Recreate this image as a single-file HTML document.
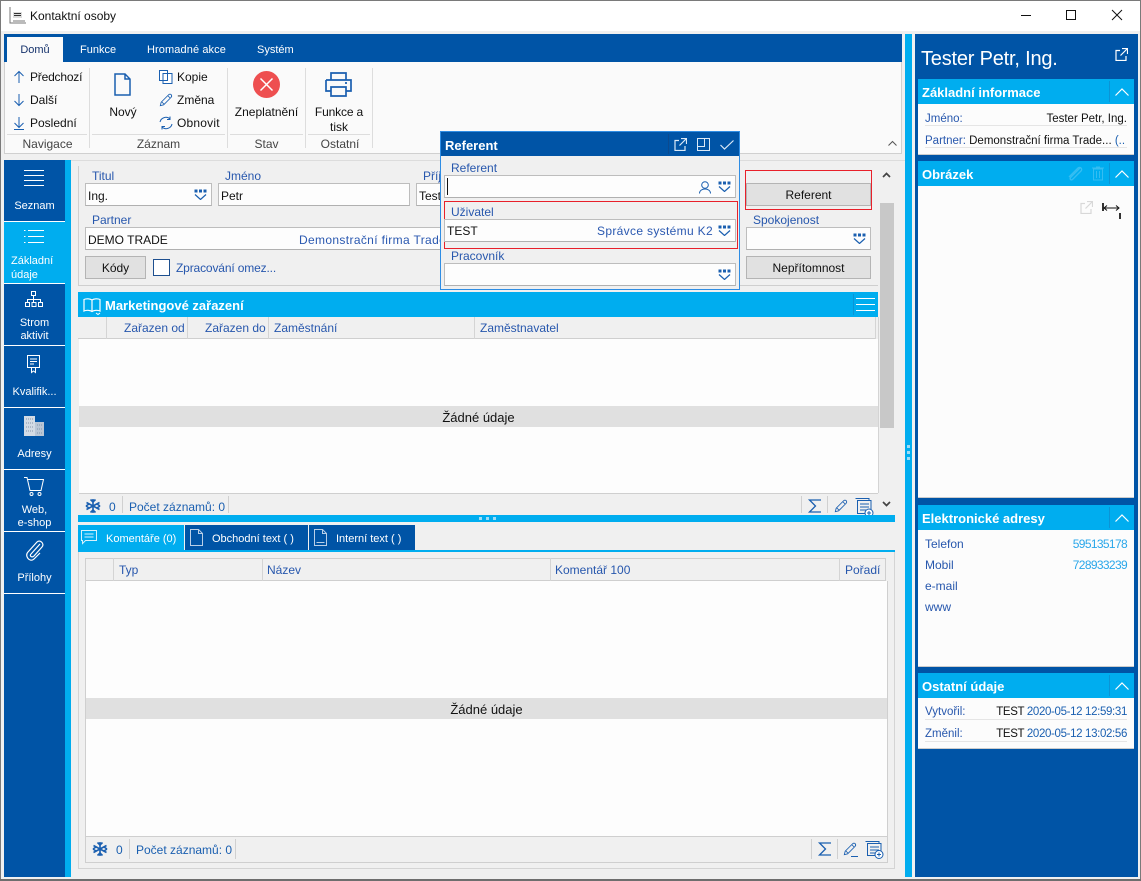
<!DOCTYPE html>
<html><head><meta charset="utf-8"><style>
html,body{margin:0;padding:0;background:#f0f0f0;}
#r{position:relative;width:1141px;height:881px;overflow:hidden;background:#f0f0f0;font:12px/16px "Liberation Sans","DejaVu Sans",sans-serif;color:#111;}
#r div{position:absolute;box-sizing:border-box;}
.t{white-space:nowrap;height:16px;}
.l{color:#2757ad;}
.b{color:#1a5fb0;}
.w{color:#fff;}
.c{text-align:center;}
.f{background:#fdfdfd;border:1px solid #bdbdbd;border-bottom-color:#b0b0b0;height:23px;}
.btn{background:#e1e1e1;border:1px solid #b4b4b4;height:23px;text-align:center;line-height:23px;}
.dk{background:#0054a6;}
.sk{background:#00adef;}
.ln{background:#c9c9c9;}
.h{font-weight:bold;font-size:13px;color:#fff;}
svg{position:absolute;overflow:visible;fill:none;}
</style></head><body><div id="r">
<svg width="0" height="0"><defs>
<symbol id="dd" viewBox="0 0 13 11"><path d="M.5.500h3v3h-3zM5 .5h3v3H5zM9.500.500h3v3h-3z" fill="#1a5fb0"/><path d="M1 5.500l5.500 5 5.500-5" stroke="#1a5fb0" stroke-width="1.200" fill="none"/></symbol>
<symbol id="up" viewBox="0 0 14 8"><path d="M.5 7.500L7 1l6.500 6.500" stroke="#fff" stroke-width="1.200" fill="none"/></symbol>
<symbol id="flake" viewBox="0 0 16 16"><g stroke="#1a5fb0" stroke-width="1.600" fill="none"><path d="M8 1v14M1.500 4.500l13 7M14.500 4.500l-13 7"/><path d="M5.500 1.500L8 4l2.500-2.500M5.500 14.500L8 12l2.500 2.500M1 8l3-2M1 8l3 2M15 8l-3-2M15 8l-3 2"/></g></symbol>
<symbol id="pen" viewBox="0 0 16 16"><path d="M1.500 14.500l1-4L11 2c1-1 2.500-.8 3 0s.8 2-.2 3l-8.500 8.500z M3 10l3 3M10 3l3 3" stroke="#1a5fb0" fill="none"/></symbol>
<symbol id="pop" viewBox="0 0 13 13"><path d="M5 2.500H1v10h10V8M7 .5h5.500V6M12.500.5L5.500 7.500" stroke="currentColor" stroke-width="1.200" fill="none"/></symbol>
</defs></svg>

<!-- window frame + title -->
<div style="left:0;top:0;width:1141px;height:31px;background:#fff"></div>
<div style="left:0;top:0;width:1141px;height:1px;background:#7a7a7a"></div>
<div style="left:0;top:0;width:1px;height:881px;background:#7a7a7a"></div>
<div style="left:1140px;top:0;width:1px;height:881px;background:#7a7a7a"></div>
<div style="left:0;top:879px;width:1141px;height:2px;background:#6e6e6e"></div>
<svg style="left:9px;top:7px" width="17" height="17"><path d="M1 0v16h16" stroke="#777"/><path d="M4 5h9v6H4z" fill="#ddd"/><path d="M5 6.500h7M5 8.500h7" stroke="#333"/><path d="M4 13h12v3H4z" fill="#bbb"/></svg>
<div class="t" style="left:30px;top:8px;color:#111">Kontaktní osoby</div>
<svg style="left:1021px;top:15px" width="10" height="1"><path d="M0 .5h10" stroke="#111"/></svg>
<svg style="left:1066px;top:10px" width="10" height="10"><path d="M.5.500h9v9h-9z" stroke="#111"/></svg>
<svg style="left:1112px;top:10px" width="10" height="10"><path d="M0 0l10 10M10 0L0 10" stroke="#111"/></svg>

<!-- ribbon -->
<div class="dk" style="left:4px;top:34px;width:898px;height:28px"></div>
<div style="left:7px;top:37px;width:56px;height:25px;background:#fafafa"></div>
<div class="t c" style="left:7px;top:42px;width:56px;font-size:11px;color:#14316b">Domů</div>
<div class="t w" style="left:80px;top:42px;font-size:11px">Funkce</div>
<div class="t w" style="left:147px;top:42px;font-size:11px;letter-spacing:.1px">Hromadné akce</div>
<div class="t w" style="left:257px;top:42px;font-size:11px">Systém</div>
<div style="left:4px;top:62px;width:898px;height:92px;background:#fafafa;border:1px solid #d0d0d0;border-top:0"></div>
<div style="left:89px;top:68px;width:1px;height:80px;background:#ddd"></div>
<div style="left:227px;top:68px;width:1px;height:80px;background:#ddd"></div>
<div style="left:305px;top:68px;width:1px;height:80px;background:#ddd"></div>
<div style="left:372px;top:68px;width:1px;height:80px;background:#ddd"></div>
<div style="left:7px;top:134px;width:80px;height:1px;background:#ddd"></div>
<div style="left:92px;top:134px;width:133px;height:1px;background:#ddd"></div>
<div style="left:230px;top:134px;width:73px;height:1px;background:#ddd"></div>
<div style="left:308px;top:134px;width:62px;height:1px;background:#ddd"></div>
<svg style="left:13px;top:71px" width="12" height="12"><path d="M6 12V1M1.500 5L6 .5 10.500 5" stroke="#1a5fb0"/></svg>
<svg style="left:13px;top:94px" width="12" height="12"><path d="M6 0v11M1.500 7L6 11.500 10.500 7" stroke="#1a5fb0"/></svg>
<svg style="left:13px;top:117px" width="12" height="13"><path d="M6 0v10M1.500 6L6 10.500 10.500 6M1 12.500h10" stroke="#1a5fb0"/></svg>
<div class="t" style="left:30px;top:69px;letter-spacing:-.2px">Předchozí</div>
<div class="t" style="left:30px;top:92px">Další</div>
<div class="t" style="left:30px;top:115px">Poslední</div>
<div class="t c" style="left:8px;top:136px;width:79px;color:#444">Navigace</div>
<svg style="left:114px;top:73px" width="17" height="23"><path d="M1 1h10l5 5v16H1zM11 1v5h5" stroke="#1a5fb0" stroke-width="1.500"/></svg>
<div class="t c" style="left:92px;top:104px;width:62px">Nový</div>
<svg style="left:159px;top:70px" width="14" height="14"><path d="M.5.500h8v10h-8zM4 3.500h9v10H4z" stroke="#1a5fb0" fill="#fff"/></svg>
<svg style="left:159px;top:93px" width="14" height="14"><use href="#pen" width="14" height="14"/></svg>
<svg style="left:159px;top:116px" width="14" height="14"><path d="M1 6a6 6 0 0 1 10-3M13 8a6 6 0 0 1-10 3M11 .5V3.500H8M3 13.500V10.500h3" stroke="#1a5fb0"/></svg>
<div class="t" style="left:177px;top:69px">Kopie</div>
<div class="t" style="left:177px;top:92px">Změna</div>
<div class="t" style="left:177px;top:115px;letter-spacing:.2px">Obnovit</div>
<div class="t c" style="left:92px;top:136px;width:133px;color:#444">Záznam</div>
<svg style="left:253px;top:71px" width="27" height="27"><circle cx="13.500" cy="13.500" r="13.500" fill="#ee4f50"/><path d="M7.500 7.500l12 12M19.500 7.500l-12 12" stroke="#fff" stroke-width="1.500"/></svg>
<div class="t c" style="left:228px;top:104px;width:77px">Zneplatnění</div>
<div class="t c" style="left:228px;top:136px;width:77px;color:#444">Stav</div>
<svg style="left:325px;top:72px" width="27" height="25"><path d="M6 8V1h15v7M1 8h25v11h-5M6 19H1V8M6 15h15v9H6zM20 11h2" stroke="#1a5fb0" stroke-width="1.700"/></svg>
<div class="t c" style="left:306px;top:104px;width:66px;letter-spacing:-.15px">Funkce a</div>
<div class="t c" style="left:306px;top:119px;width:66px">tisk</div>
<div class="t c" style="left:306px;top:136px;width:68px;color:#444">Ostatní</div>
<svg style="left:888px;top:141px" width="9" height="5"><path d="M.5 4.500L4.500.5l4 4" stroke="#555"/></svg>

<!-- blue right strip + right panel -->
<div class="sk" style="left:905px;top:34px;width:7px;height:843px"></div>
<div style="left:907px;top:445px;width:3px;height:18px;background:repeating-linear-gradient(#9fdcf5 0,#9fdcf5 3px,#00adef 3px,#00adef 6px)"></div>
<div class="dk" style="left:915px;top:34px;width:223px;height:843px"></div>
<div class="t w" style="left:921px;top:47px;font-size:20px;line-height:24px;height:24px;letter-spacing:-.2px">Tester Petr, Ing.</div>
<svg style="left:1115px;top:48px;color:#fff" width="13" height="13"><use href="#pop" width="13" height="13"/></svg>

<div class="sk" style="left:918px;top:79px;width:216px;height:25px"></div>
<div class="t h" style="left:922px;top:85px">Základní informace</div>
<div style="left:1109px;top:81px;width:1px;height:21px;background:#0a94d6"></div>
<svg style="left:1115px;top:88px" width="14" height="8"><use href="#up" width="14" height="8"/></svg>
<div style="left:918px;top:104px;width:216px;height:51px;background:#fcfcfc;border-bottom:1px solid #ccc"></div>
<div class="t l" style="left:925px;top:111px;font-size:11.5px">Jméno:</div>
<div class="t" style="right:14px;top:111px;font-size:11.5px">Tester Petr, Ing.</div>
<div style="left:925px;top:125px;width:202px;height:1px;background:#e5e5e5"></div>
<div class="t" style="left:925px;top:133px;font-size:11.5px"><span class="l">Partner:</span> Demonstrační firma Trade... <span class="b">(..</span></div>
<div style="left:925px;top:147px;width:202px;height:1px;background:#e5e5e5"></div>

<div class="sk" style="left:918px;top:161px;width:216px;height:25px"></div>
<div class="t h" style="left:922px;top:167px">Obrázek</div>
<div style="left:1109px;top:163px;width:1px;height:21px;background:#0a94d6"></div>
<svg style="left:1115px;top:170px" width="14" height="8"><use href="#up" width="14" height="8"/></svg>
<svg style="left:1067px;top:165px" width="16" height="17"><path d="M13 3L4 12c-2 2 0 4 2 2l8-8c2-2-1-5-3-3L2 12" stroke="#35bdf2" stroke-width="1.300"/></svg>
<svg style="left:1092px;top:166px" width="12" height="15"><path d="M1.500 3h9v11h-9zM0 2h12M4 1h4M4.500 5v7M7.500 5v7" stroke="#35bdf2"/></svg>
<div style="left:918px;top:186px;width:216px;height:312px;background:#fcfcfc;border-bottom:1px solid #ccc"></div>
<svg style="left:1080px;top:201px;color:#d8d8d8" width="13" height="13"><use href="#pop" width="13" height="13"/></svg>
<svg style="left:1102px;top:203px" width="20" height="16"><path d="M1 0v8" stroke="#333" stroke-width="2"/><path d="M2 5h15M5 2.500L2 5l3 2.500M14 2.500L17 5l-3 2.500" stroke="#111"/><path d="M18 10v6" stroke="#333" stroke-width="2"/></svg>

<div class="sk" style="left:918px;top:505px;width:216px;height:25px"></div>
<div class="t h" style="left:922px;top:511px">Elektronické adresy</div>
<div style="left:1109px;top:507px;width:1px;height:21px;background:#0a94d6"></div>
<svg style="left:1115px;top:514px" width="14" height="8"><use href="#up" width="14" height="8"/></svg>
<div style="left:918px;top:530px;width:216px;height:137px;background:#fcfcfc;border-bottom:1px solid #ccc"></div>
<div class="t l" style="left:925px;top:536px">Telefon</div>
<div class="t" style="right:14px;top:536px;color:#2aa7ea;letter-spacing:-.65px">595135178</div>
<div class="t l" style="left:925px;top:557px">Mobil</div>
<div class="t" style="right:14px;top:557px;color:#2aa7ea;letter-spacing:-.65px">728933239</div>
<div class="t l" style="left:925px;top:578px">e-mail</div>
<div class="t l" style="left:925px;top:599px">www</div>

<div class="sk" style="left:918px;top:673px;width:216px;height:25px"></div>
<div class="t h" style="left:922px;top:679px">Ostatní údaje</div>
<div style="left:1109px;top:675px;width:1px;height:21px;background:#0a94d6"></div>
<svg style="left:1115px;top:682px" width="14" height="8"><use href="#up" width="14" height="8"/></svg>
<div style="left:918px;top:698px;width:216px;height:51px;background:#fcfcfc;border-bottom:1px solid #ccc"></div>
<div class="t l" style="left:925px;top:704px;font-size:11.5px">Vytvořil:</div>
<div class="t" style="right:14px;top:704px;font-size:11.5px;letter-spacing:-.35px">TEST <span class="b">2020-05-12 12:59:31</span></div>
<div style="left:925px;top:719px;width:202px;height:1px;background:#e5e5e5"></div>
<div class="t l" style="left:925px;top:726px;font-size:11.5px">Změnil:</div>
<div class="t" style="right:14px;top:726px;font-size:11.5px;letter-spacing:-.35px">TEST <span class="b">2020-05-12 13:02:56</span></div>
<div style="left:925px;top:741px;width:202px;height:1px;background:#e5e5e5"></div>

<!-- left sidebar -->
<div class="dk" style="left:4px;top:160px;width:61px;height:717px"></div>
<div class="sk" style="left:65px;top:160px;width:6px;height:717px"></div>
<div class="sk" style="left:4px;top:222px;width:61px;height:61px"></div>
<div style="left:4px;top:221px;width:61px;height:1px;background:#fff"></div>
<div style="left:4px;top:283px;width:61px;height:1px;background:#fff"></div>
<div style="left:4px;top:345px;width:61px;height:1px;background:#fff"></div>
<div style="left:4px;top:407px;width:61px;height:1px;background:#fff"></div>
<div style="left:4px;top:469px;width:61px;height:1px;background:#fff"></div>
<div style="left:4px;top:531px;width:61px;height:1px;background:#fff"></div>
<div style="left:4px;top:593px;width:61px;height:1px;background:#fff"></div>
<svg style="left:24px;top:170px" width="20" height="17"><path d="M0 .5h20M0 5.500h20M0 10.500h20M0 15.500h20" stroke="#fff"/></svg>
<div class="t w c" style="left:4px;top:198px;width:61px;font-size:11px">Seznam</div>
<svg style="left:24px;top:230px" width="20" height="14"><path d="M4 .5h16M4 6.500h16M4 12.500h16" stroke="#fff"/><path d="M0 .5h1.500M0 6.500h1.500M0 12.500h1.500" stroke="#fff"/></svg>
<div class="t w" style="left:11px;top:254px;font-size:11px;line-height:14px;height:30px">Základní<br>údaje</div>
<svg style="left:25px;top:291px" width="18" height="16"><path d="M6.500.5h4v4h-4zM.5 11.500h4v4h-4zM7 11.500h4v4H7zM13.500 11.500h4v4h-4zM8.500 4.500v7M2.500 11.500v-3h13v3" stroke="#fff"/></svg>
<div class="t w c" style="left:4px;top:317px;width:61px;font-size:11px;line-height:13px;height:28px">Strom<br>aktivit</div>
<svg style="left:27px;top:355px" width="14" height="18"><path d="M.5.500h12v12h-12zM3 4h7M3 6.500h7M3 9h4M4.500 12.500v5l2-1.500 2 1.500v-5" stroke="#fff"/></svg>
<div class="t w c" style="left:4px;top:384px;width:61px;font-size:11px">Kvalifik...</div>
<svg style="left:24px;top:416px" width="20" height="20"><path d="M0 0h11v20H0z" fill="#d3dbe5"/><path d="M11 6h9v14h-9z" fill="#b9c6d6"/><path d="M2 3h7M2 7h7M2 11h7M2 15h7M13 9h5M13 13h5M13 17h5" stroke="#8496ab" stroke-dasharray="1 1"/></svg>
<div class="t w c" style="left:4px;top:446px;width:61px;font-size:11px">Adresy</div>
<svg style="left:24px;top:477px" width="20" height="19"><path d="M0 .5h3l3 13h11l2.500-11H4" stroke="#fff"/><circle cx="7.500" cy="17" r="1.500" stroke="#fff"/><circle cx="15.500" cy="17" r="1.500" stroke="#fff"/></svg>
<div class="t w c" style="left:4px;top:504px;width:61px;font-size:11px;line-height:13px;height:28px">Web,<br>e-shop</div>
<svg style="left:25px;top:540px" width="19" height="21"><path d="M15 4L6 14c-2 2 1 4 3 2l8-9c3-3-2-8-5-5L3 12c-4 4 2 11 6 7l6-6" stroke="#fff" stroke-width="1.200"/></svg>
<div class="t w c" style="left:4px;top:570px;width:61px;font-size:11px">Přílohy</div>

<!-- form group -->
<div style="left:78px;top:166px;width:1px;height:119px;background:#d0d0d0"></div>
<div style="left:78px;top:285px;width:800px;height:1px;background:#cfcfcf"></div>
<div style="left:71px;top:160px;width:834px;height:1px;background:#dcdcdc"></div>
<div class="t l" style="left:92px;top:168px">Titul</div>
<div class="f" style="left:85px;top:183px;width:127px"></div>
<div class="t" style="left:88px;top:188px">Ing.</div>
<svg style="left:194px;top:189px" width="13" height="11"><use href="#dd" width="13" height="11"/></svg>
<div class="t l" style="left:225px;top:168px">Jméno</div>
<div class="f" style="left:218px;top:183px;width:192px"></div>
<div class="t" style="left:221px;top:188px">Petr</div>
<div class="t l" style="left:423px;top:168px">Příjmení</div>
<div class="f" style="left:416px;top:183px;width:60px"></div>
<div class="t" style="left:419px;top:188px">Tester</div>
<div class="t l" style="left:92px;top:212px">Partner</div>
<div class="f" style="left:85px;top:227px;width:370px"></div>
<div class="t" style="left:88px;top:232px">DEMO TRADE</div>
<div class="t" style="left:299px;top:232px;color:#2a58b0;letter-spacing:.35px">Demonstrační firma Trade</div>
<div class="btn" style="left:85px;top:256px;width:61px">Kódy</div>
<div style="left:153px;top:259px;width:17px;height:17px;background:#fff;border:1px solid #1d4f8f"></div>
<div class="t l" style="left:176px;top:260px;letter-spacing:-.15px">Zpracování omez...</div>

<div style="left:745px;top:170px;width:127px;height:40px;border:1px solid #e8202a"></div>
<div class="btn" style="left:746px;top:183px;width:125px">Referent</div>
<div class="t l" style="left:753px;top:212px">Spokojenost</div>
<div class="f" style="left:746px;top:227px;width:125px"></div>
<svg style="left:853px;top:233px" width="13" height="11"><use href="#dd" width="13" height="11"/></svg>
<div class="btn" style="left:746px;top:256px;width:125px">Nepřítomnost</div>

<!-- scrollbar -->
<svg style="left:882px;top:172px" width="9" height="6"><path d="M1 5l3.500-3.500L8 5" stroke="#444" stroke-width="1.700"/></svg>
<div style="left:880px;top:203px;width:14px;height:225px;background:#c8c8c8"></div>
<svg style="left:882px;top:501px" width="9" height="6"><path d="M1 1l3.500 3.500L8 1" stroke="#444" stroke-width="1.700"/></svg>

<!-- marketing table -->
<div class="sk" style="left:78px;top:292px;width:800px;height:25px"></div>
<svg style="left:83px;top:298px" width="18" height="17"><path d="M9 2C7 .5 3 .5 1 1.500V13c2-1 6-1 8 .5 2-1.500 6-1.500 8-.5V1.500C15 .5 11 .5 9 2zM9 2v11.500" stroke="#fff" stroke-width="1.200"/><path d="M13 15l2 1.500 2-1.500" stroke="#fff"/></svg>
<div class="t h" style="left:105px;top:298px">Marketingové zařazení</div>
<div style="left:853px;top:294px;width:1px;height:21px;background:#0a94d6"></div>
<svg style="left:856px;top:298px" width="19" height="14"><path d="M0 .5h19M0 6.500h19M0 12.500h19" stroke="#fff"/></svg>
<div style="left:78px;top:317px;width:798px;height:22px;background:#f0f0f0;border-bottom:1px solid #cfcfcf"></div>
<div style="left:106px;top:317px;width:1px;height:22px;background:#d4d4d4"></div>
<div style="left:187px;top:317px;width:1px;height:22px;background:#d4d4d4"></div>
<div style="left:268px;top:317px;width:1px;height:22px;background:#d4d4d4"></div>
<div style="left:474px;top:317px;width:1px;height:22px;background:#d4d4d4"></div>
<div style="left:875px;top:317px;width:1px;height:22px;background:#d4d4d4"></div>
<div class="t l" style="left:124px;top:320px">Zařazen od</div>
<div class="t l" style="left:205px;top:320px">Zařazen do</div>
<div class="t l" style="left:274px;top:320px">Zaměstnání</div>
<div class="t l" style="left:480px;top:320px">Zaměstnavatel</div>
<div style="left:79px;top:339px;width:799px;height:154px;background:#fdfdfd"></div>
<div style="left:79px;top:406px;width:799px;height:21px;background:#e0e0e0"></div>
<div class="t c" style="left:79px;top:410px;width:799px;font-size:13px">Žádné údaje</div>
<div style="left:878px;top:317px;width:1px;height:176px;background:#d4d4d4"></div>
<div style="left:79px;top:493px;width:799px;height:1px;background:#cfcfcf"></div>
<svg style="left:85px;top:498px" width="16" height="16"><use href="#flake" width="16" height="16"/></svg>
<div class="t b" style="left:109px;top:499px">0</div>
<div style="left:122px;top:496px;width:1px;height:17px;background:#d0d0d0"></div>
<div class="t b" style="left:129px;top:499px">Počet záznamů: 0</div>
<div style="left:228px;top:496px;width:1px;height:17px;background:#d0d0d0"></div>
<div style="left:801px;top:496px;width:1px;height:17px;background:#d0d0d0"></div>
<div style="left:827px;top:496px;width:1px;height:17px;background:#d0d0d0"></div>
<svg style="left:808px;top:499px" width="14" height="14"><path d="M13 1H1.500L7.500 7 1.500 13H13" stroke="#1a5fb0" stroke-width="1.300"/></svg>
<svg style="left:834px;top:499px" width="14" height="14"><use href="#pen" width="14" height="14"/></svg>
<svg style="left:855px;top:498px" width="19" height="18"><path d="M.5.500H14v2M2.500 2.500H16v13H2.500zM5 6h9M5 9h9M5 12h6" stroke="#1a5fb0"/><circle cx="14" cy="15" r="4" stroke="#1a5fb0" fill="#fff"/><path d="M12 15h4M14 13v4" stroke="#1a5fb0"/></svg>

<!-- splitter & tabs -->
<div class="sk" style="left:78px;top:515px;width:817px;height:7px"></div>
<div style="left:479px;top:517px;width:19px;height:3px;background:repeating-linear-gradient(90deg,#9fdcf5 0,#9fdcf5 3px,#00adef 3px,#00adef 7px)"></div>
<div class="sk" style="left:78px;top:525px;width:106px;height:25px"></div>
<div class="dk" style="left:185px;top:525px;width:123px;height:25px"></div>
<div class="dk" style="left:309px;top:525px;width:106px;height:25px"></div>
<svg style="left:81px;top:530px" width="16" height="15"><path d="M.5.500h15v10H4.500L1.500 13.500V10.500H.5zM3.500 4h9M3.500 7h9" stroke="#d6f1fc"/></svg>
<div class="t w" style="left:106px;top:531px;font-size:11px">Komentáře (0)</div>
<svg style="left:190px;top:529px" width="13" height="17"><path d="M.5.500h8l4 4v12H.5zM8.500.500v4h4" stroke="#b9cfe8"/></svg>
<div class="t w" style="left:212px;top:531px;font-size:11px">Obchodní text ( )</div>
<svg style="left:314px;top:529px" width="13" height="17"><path d="M.5.500h8l4 4v12H.5zM8.500.500v4h4M2.500 13.500h8" stroke="#b9cfe8"/></svg>
<div class="t w" style="left:336px;top:531px;font-size:11px">Interní text ( )</div>
<div class="sk" style="left:78px;top:550px;width:817px;height:2px"></div>

<!-- lower panel -->
<div style="left:78px;top:552px;width:817px;height:317px;border:1px solid #d4d4d4;border-top:0"></div>
<div style="left:85px;top:558px;width:801px;height:23px;background:#f0f0f0;border:1px solid #cfcfcf"></div>
<div style="left:113px;top:558px;width:1px;height:23px;background:#d4d4d4"></div>
<div style="left:262px;top:558px;width:1px;height:23px;background:#d4d4d4"></div>
<div style="left:550px;top:558px;width:1px;height:23px;background:#d4d4d4"></div>
<div style="left:839px;top:558px;width:1px;height:23px;background:#d4d4d4"></div>
<div class="t l" style="left:119px;top:562px">Typ</div>
<div class="t l" style="left:267px;top:562px">Název</div>
<div class="t l" style="left:555px;top:562px">Komentář 100</div>
<div class="t l" style="left:845px;top:562px">Pořadí</div>
<div style="left:85px;top:581px;width:803px;height:256px;background:#fdfdfd;border-left:1px solid #cfcfcf;border-right:1px solid #cfcfcf;border-bottom:1px solid #cfcfcf"></div>
<div style="left:86px;top:698px;width:801px;height:21px;background:#e0e0e0"></div>
<div class="t c" style="left:86px;top:702px;width:801px;font-size:13px">Žádné údaje</div>
<div style="left:85px;top:837px;width:1px;height:25px;background:#cfcfcf"></div>
<div style="left:887px;top:837px;width:1px;height:25px;background:#cfcfcf"></div>
<div style="left:85px;top:862px;width:803px;height:1px;background:#cfcfcf"></div>
<svg style="left:92px;top:841px" width="16" height="16"><use href="#flake" width="16" height="16"/></svg>
<div class="t b" style="left:116px;top:842px">0</div>
<div style="left:129px;top:839px;width:1px;height:20px;background:#d0d0d0"></div>
<div class="t b" style="left:136px;top:842px">Počet záznamů: 0</div>
<div style="left:235px;top:839px;width:1px;height:20px;background:#d0d0d0"></div>
<div style="left:811px;top:839px;width:1px;height:20px;background:#d0d0d0"></div>
<div style="left:837px;top:839px;width:1px;height:20px;background:#d0d0d0"></div>
<svg style="left:818px;top:842px" width="14" height="14"><path d="M13 1H1.500L7.500 7 1.500 13H13" stroke="#1a5fb0" stroke-width="1.300"/></svg>
<svg style="left:843px;top:842px" width="15" height="15"><use href="#pen" width="14" height="14"/><path d="M8 14.500h7" stroke="#1a5fb0"/></svg>
<svg style="left:865px;top:841px" width="19" height="18"><path d="M.5.500H14v2M2.500 2.500H16v12H2.500zM5 6h9M5 9h9M5 12h6" stroke="#1a5fb0"/><circle cx="14" cy="13.500" r="4" stroke="#1a5fb0" fill="#fff"/><path d="M12 13.500h4M14 11.500v4" stroke="#1a5fb0"/></svg>

<!-- popup -->
<div style="left:440px;top:131px;width:300px;height:159px;background:#f0f0f0;border:1px solid #2f8de4"></div>
<div class="dk" style="left:441px;top:132px;width:298px;height:24px"></div>
<div class="t h" style="left:445px;top:138px">Referent</div>
<div style="left:668px;top:134px;width:1px;height:20px;background:#0b4a8f"></div>
<svg style="left:674px;top:138px;color:#dbe9f7" width="13" height="13"><use href="#pop" width="13" height="13"/></svg>
<svg style="left:697px;top:138px" width="13" height="13"><path d="M.5.500h12v12H.5zM.5 8.500h7v-8" stroke="#dbe9f7"/></svg>
<svg style="left:720px;top:140px" width="14" height="10"><path d="M.5 5l4 4L13.500.5" stroke="#dbe9f7" stroke-width="1.200"/></svg>
<div class="t l" style="left:451px;top:160px">Referent</div>
<div class="f" style="left:444px;top:175px;width:292px"></div>
<div style="left:447px;top:178px;width:1px;height:17px;background:#111"></div>
<svg style="left:699px;top:181px" width="12" height="13"><circle cx="6" cy="4" r="3.300" stroke="#1a5fb0"/><path d="M.5 12.500c0-6 11-6 11 0" stroke="#1a5fb0"/></svg>
<svg style="left:718px;top:181px" width="13" height="11"><use href="#dd" width="13" height="11"/></svg>
<div class="t l" style="left:451px;top:204px">Uživatel</div>
<div class="f" style="left:444px;top:219px;width:292px"></div>
<div style="left:444px;top:201px;width:294px;height:48px;border:1px solid #e8202a"></div>
<div style="left:444px;top:219px;width:292px;height:23px;border:1px solid #bdbdbd;border-bottom-color:#b0b0b0"></div>
<div class="t" style="left:447px;top:223px">TEST</div>
<div class="t" style="right:428px;top:223px;color:#2a58b0;letter-spacing:.33px">Správce systému K2</div>
<svg style="left:718px;top:225px" width="13" height="11"><use href="#dd" width="13" height="11"/></svg>
<div class="t l" style="left:451px;top:248px">Pracovník</div>
<div class="f" style="left:444px;top:263px;width:292px"></div>
<svg style="left:718px;top:269px" width="13" height="11"><use href="#dd" width="13" height="11"/></svg>
</div></body></html>
